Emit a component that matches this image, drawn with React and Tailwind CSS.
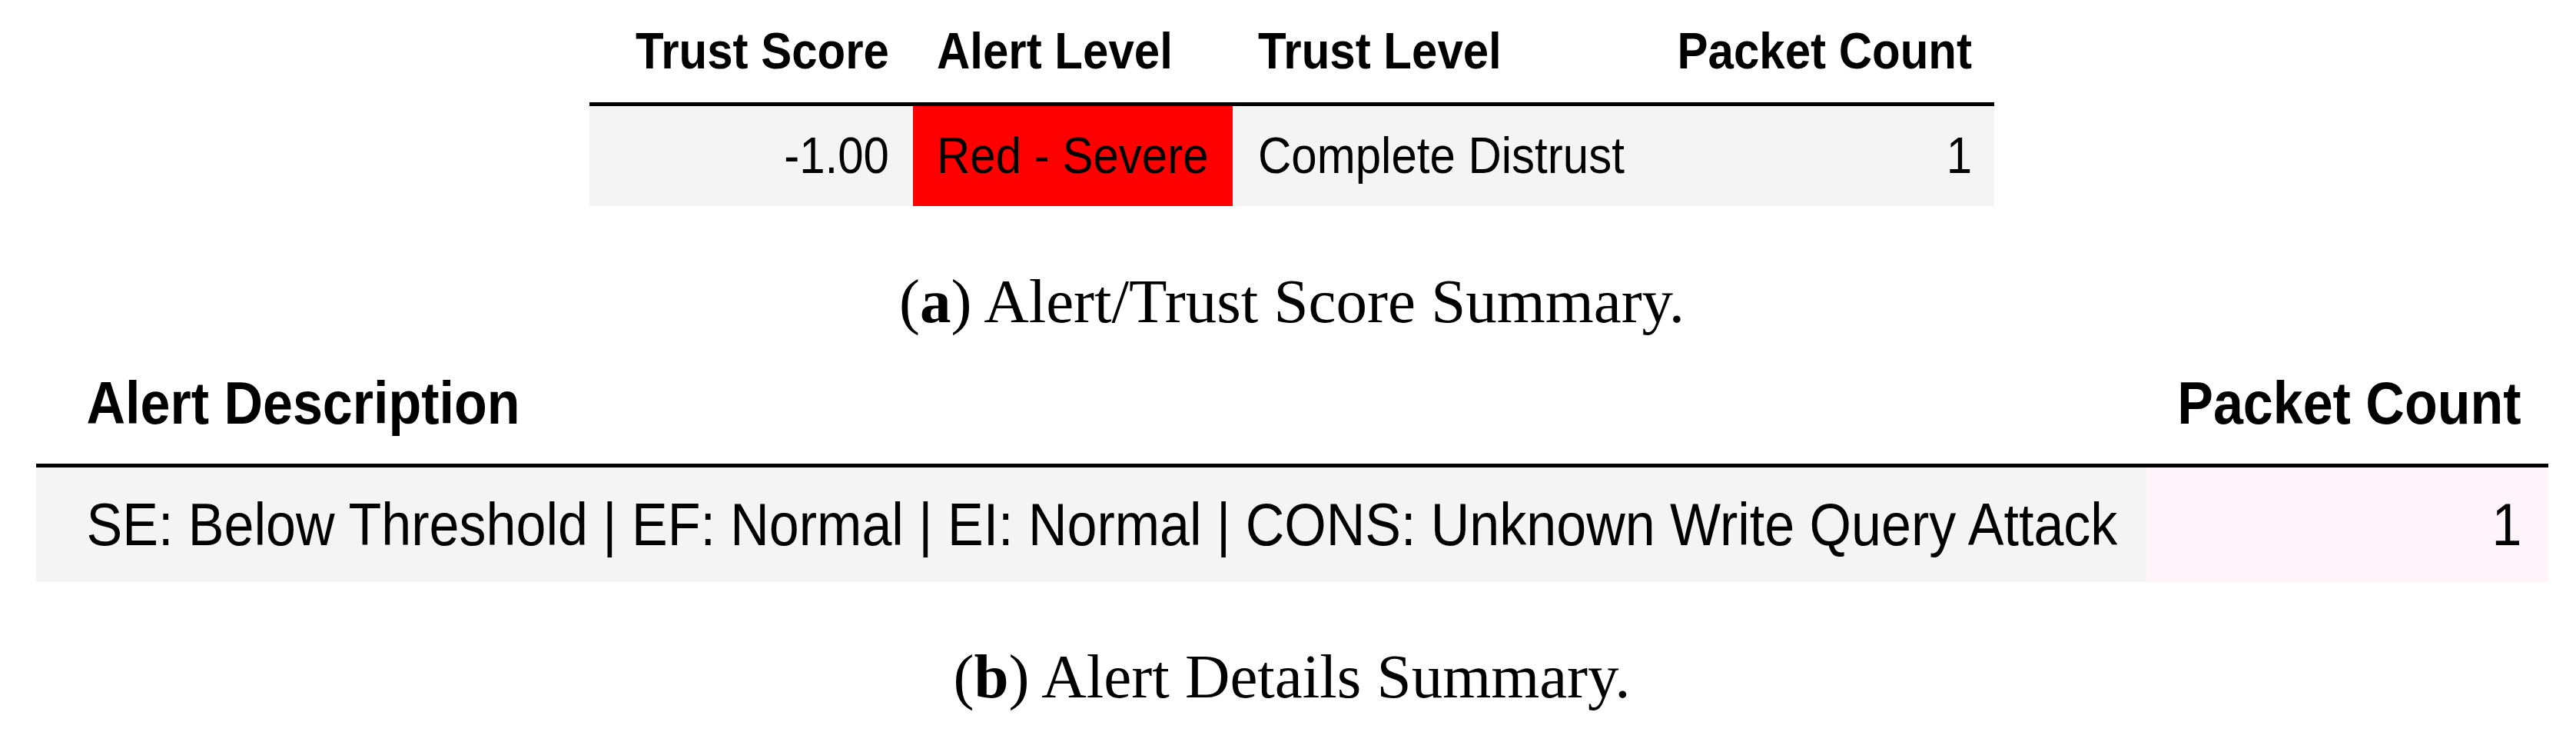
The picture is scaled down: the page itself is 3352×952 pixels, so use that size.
import React from 'react';

const Txt = ({ children }) => (
    <span className="inline-block leading-none scale-y-110 whitespace-nowrap">{children}</span>
);

const SummaryTable = () => (
    <div className="w-[1828px] text-[60px]">
        <div className="grid grid-cols-[421px_416px_544px_447px] border-b-[5px] border-black font-bold">
            <div className="h-[133px] flex items-end justify-end pb-[36px] pr-[31px]"><Txt>Trust Score</Txt></div>
            <div className="h-[133px] flex items-end pb-[36px] pl-[31px]"><Txt>Alert Level</Txt></div>
            <div className="h-[133px] flex items-end pb-[36px] pl-[33px]"><Txt>Trust Level</Txt></div>
            <div className="h-[133px] flex items-end justify-end pb-[36px] pr-[29px]"><Txt>Packet Count</Txt></div>
        </div>
        <div className="grid grid-cols-[421px_416px_544px_447px] bg-[#f4f4f4]">
            <div className="h-[130px] flex items-center justify-end pr-[31px]"><Txt>-1.00</Txt></div>
            <div className="h-[130px] flex items-center pl-[31px] bg-[#ff0000]"><Txt>Red - Severe</Txt></div>
            <div className="h-[130px] flex items-center pl-[33px]"><Txt>Complete Distrust</Txt></div>
            <div className="h-[130px] flex items-center justify-end pr-[29px]"><Txt>1</Txt></div>
        </div>
    </div>
);

const DetailsTable = () => (
    <div className="w-[3269px] text-[70px]">
        <div className="grid grid-cols-[2746px_523px] border-b-[5px] border-black font-bold">
            <div className="h-[170px] flex items-end pb-[43px] pl-[66px]"><Txt>Alert Description</Txt></div>
            <div className="h-[170px] flex items-end justify-end pb-[43px] pr-[35px]"><Txt>Packet Count</Txt></div>
        </div>
        <div className="grid grid-cols-[2746px_523px]">
            <div className="h-[149px] flex items-center pl-[66px] bg-[#f4f4f4]">
                <Txt>SE: Below Threshold | EF: Normal | EI: Normal | CONS: Unknown Write Query Attack</Txt>
            </div>
            <div className="h-[149px] flex items-center justify-end pr-[34px] bg-[#fff4fa]"><Txt>1</Txt></div>
        </div>
    </div>
);

const Caption = ({ label, text, className }) => (
    <p className={`font-['Liberation_Serif','Times_New_Roman',serif] text-[81px] leading-none whitespace-nowrap ${className}`}>
        (<span className="font-bold">{label}</span>) {text}
    </p>
);

export default function App() {
    return (
        <div className="w-[3352px] min-h-[952px] bg-white pl-[10px] flex flex-col items-center text-black font-['Liberation_Sans',Arial,sans-serif]">
            <SummaryTable />
            <Caption label="a" text="Alert/Trust Score Summary." className="mt-[84px]" />
            <DetailsTable />
            <Caption label="b" text="Alert Details Summary." className="mt-[83px]" />
        </div>
    );
}
